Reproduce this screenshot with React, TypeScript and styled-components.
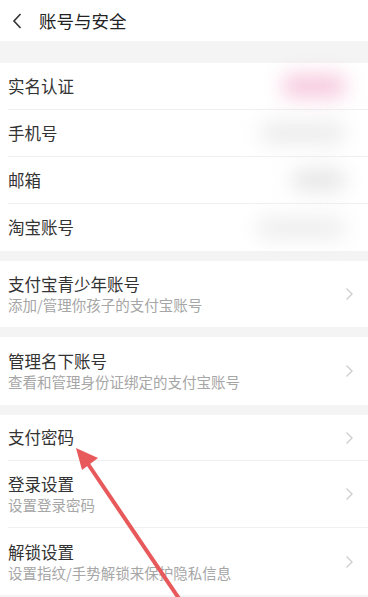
import styled, { createGlobalStyle } from "styled-components";

const GlobalStyle = createGlobalStyle`
  *, *::before, *::after { box-sizing: border-box; }
  html, body {
    margin: 0;
    padding: 0;
    background: #ffffff;
    font-family: "Noto Sans CJK SC", "Noto Sans", sans-serif;
    overflow: hidden;
  }
`;

const Page = styled.div`
  position: relative;
  width: 368px;
  height: 597px;
  overflow: hidden;
  background: #f4f4f4;
`;

const Header = styled.header`
  height: 41px;
  display: flex;
  align-items: center;
  padding-left: 11px;
  background: #fff;
  gap: 16px;
`;

const Title = styled.h1`
  margin: 0;
  font-size: 17.5px;
  font-weight: 400;
  color: #222;
`;

const Group = styled.section<{ $gap: number }>`
  margin-top: ${(p) => p.$gap}px;
  background: #fff;
`;

const Row = styled.div<{ $h: number; $last?: boolean }>`
  height: ${(p) => p.$h}px;
  margin-left: 8px;
  padding-right: 14px;
  display: flex;
  align-items: center;
  justify-content: space-between;
  border-bottom: ${(p) => (p.$last ? "none" : "1px solid #f0f0f0")};
`;

const Texts = styled.div`
  display: flex;
  flex-direction: column;
`;

const Label = styled.span`
  font-size: 16.5px;
  line-height: 21px;
  color: #333;
`;

const Sub = styled.span`
  font-size: 14.5px;
  line-height: 19px;
  color: #a6a6a6;
`;

const Blur = styled.span<{ $w: number; $c: string }>`
  width: ${(p) => p.$w}px;
  height: 22px;
  margin-right: 8px;
  background: ${(p) => p.$c};
  filter: blur(10px);
  border-radius: 10px;
`;

const Chevron = styled.svg`
  width: 9px;
  height: 14px;
  flex-shrink: 0;
`;

const Arrow = styled.svg`
  position: absolute;
  inset: 0;
  pointer-events: none;
`;

function Chev() {
  return (
    <Chevron viewBox="0 0 9 14">
      <path d="M1.5 1.5 L7 7 L1.5 12.5" fill="none" stroke="#cfcfcf" strokeWidth="1.4" />
    </Chevron>
  );
}

const bound = [
  { label: "实名认证", w: 64, c: "#f6c6dc" },
  { label: "手机号", w: 86, c: "#ececec" },
  { label: "邮箱", w: 54, c: "#e6e6e6" },
  { label: "淘宝账号", w: 90, c: "#eeeeee" },
];

const security = [
  { label: "支付密码" },
  { label: "登录设置", sub: "设置登录密码" },
  { label: "解锁设置", sub: "设置指纹/手势解锁来保护隐私信息" },
];

export default function App() {
  return (
    <Page>
      <GlobalStyle />
      <Header>
        <svg width="12" height="18" viewBox="0 0 12 18">
          <path d="M9.5 2 L3 9 L9.5 16" fill="none" stroke="#333" strokeWidth="1.6" />
        </svg>
        <Title>账号与安全</Title>
      </Header>
      <Group $gap={22}>
        {bound.map((b, i) => (
          <Row key={b.label} $h={47} $last={i === bound.length - 1}>
            <Label>{b.label}</Label>
            <Blur $w={b.w} $c={b.c} />
          </Row>
        ))}
      </Group>
      <Group $gap={10}>
        <Row $h={66} $last>
          <Texts>
            <Label>支付宝青少年账号</Label>
            <Sub>添加/管理你孩子的支付宝账号</Sub>
          </Texts>
          <Chev />
        </Row>
      </Group>
      <Group $gap={10}>
        <Row $h={68} $last>
          <Texts>
            <Label>管理名下账号</Label>
            <Sub>查看和管理身份证绑定的支付宝账号</Sub>
          </Texts>
          <Chev />
        </Row>
      </Group>
      <Group $gap={10}>
        {security.map((s, i) => (
          <Row key={s.label} $h={s.sub ? 67 : 46} $last={i === security.length - 1}>
            <Texts>
              <Label>{s.label}</Label>
              {s.sub && <Sub>{s.sub}</Sub>}
            </Texts>
            <Chev />
          </Row>
        ))}
      </Group>
      <Arrow width="368" height="597" viewBox="0 0 368 597">
        <line x1="88" y1="464" x2="180" y2="600" stroke="#e8595b" strokeWidth="4" strokeLinecap="round" />
        <polygon points="76,448 98,458 82,470" fill="#e8595b" />
      </Arrow>
    </Page>
  );
}
